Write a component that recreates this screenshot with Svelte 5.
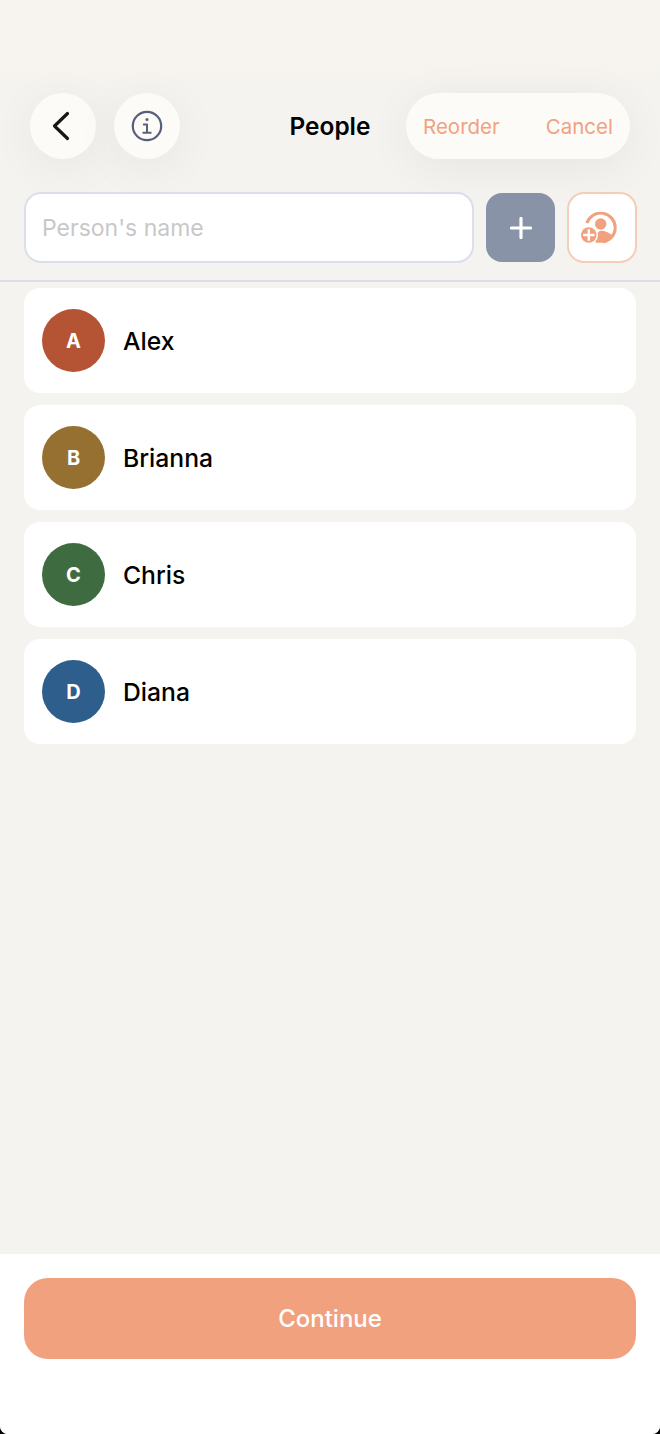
<script>
  const people = [
    { name: 'Alex', color: '#b55434' },
    { name: 'Brianna', color: '#967030' },
    { name: 'Chris', color: '#3f6b40' },
    { name: 'Diana', color: '#2e5f8c' }
  ];
</script>

<div class="page">
  <header class="topbar">
    <div class="left">
      <button class="round" aria-label="Back">
        <svg width="22" height="32" viewBox="0 0 22 32" fill="none">
          <path d="M15.500 3.500 L2.500 16 L15.500 28.500" stroke="#171717" stroke-width="3.200" stroke-linecap="round" stroke-linejoin="round" />
        </svg>
      </button>
      <button class="round" aria-label="Info">
        <svg width="32" height="32" viewBox="0 0 32 32" fill="none" stroke="#56607a" stroke-linecap="round">
          <circle cx="16" cy="16" r="14.200" stroke-width="2.200" />
          <circle cx="16" cy="9.500" r="1.500" fill="#56607a" stroke="none" />
          <path d="M12.800 14.500 H16 V22.500 M12.300 22.800 H19.700" stroke-width="2" stroke-linejoin="round" />
        </svg>
      </button>
    </div>
    <h1>People</h1>
    <div class="pill">
      <span>Reorder</span>
      <span>Cancel</span>
    </div>
  </header>

  <div class="entry">
    <input type="text" placeholder="Person's name" />
    <button class="add" aria-label="Add">
      <svg width="22" height="22" viewBox="0 0 22 22" fill="none" stroke="#fff" stroke-width="3.200" stroke-linecap="round">
        <path d="M11 1.500 V20.500 M1.500 11 H20.500" />
      </svg>
    </button>
    <button class="contacts" aria-label="Add from contacts">
      <svg width="36" height="32" viewBox="0 0 36 32" fill="none">
        <path d="M5.800 11 A14.600 14.600 0 1 1 22 30.100" stroke="#f2a17f" stroke-width="3" />
        <circle cx="19.700" cy="12" r="5.700" fill="#f2a17f" />
        <path d="M14.500 30.800 C15 22 17 18.800 20 18.800 C24 18.800 28 20.500 31.500 23.500 C29.500 28 25 30.500 21 30.800 Z" fill="#f2a17f" />
        <circle cx="7.800" cy="23" r="9.200" fill="#fff" />
        <circle cx="7.800" cy="23" r="7.800" fill="#f2a17f" />
        <path d="M7.800 18.300 V27.700 M3.100 23 H12.500" stroke="#fff" stroke-width="2.400" stroke-linecap="round" />
      </svg>
    </button>
  </div>

  <div class="list">
    {#each people as p}
      <div class="card">
        <div class="avatar" style="background: {p.color}">{p.name[0]}</div>
        <div class="name">{p.name}</div>
      </div>
    {/each}
  </div>

  <footer>
    <button class="continue">Continue</button>
  </footer>
</div>

<style>
  :global(body) {
    margin: 0;
    background: #000;
    font-family: Inter, "Liberation Sans", sans-serif;
  }

  button {
    border: none;
    padding: 0;
    font-family: inherit;
    display: flex;
    align-items: center;
    justify-content: center;
  }

  .page {
    height: 1434px;
    display: flex;
    flex-direction: column;
    background: linear-gradient(#f7f4ef 55px, #f5f3ef 85px);
    border-radius: 0 0 8px 8px;
    overflow: hidden;
  }

  .topbar {
    position: relative;
    z-index: 1;
    display: grid;
    grid-template-columns: 1fr auto 1fr;
    align-items: center;
    padding: 93px 30px 0;
  }

  .left {
    display: flex;
    gap: 18px;
  }

  .round {
    width: 66px;
    height: 66px;
    border-radius: 50%;
    background: #fcfbf7;
    box-shadow: 0 8px 48px rgba(0, 0, 0, 0.06);
  }

  h1 {
    margin: 0;
    font-size: 24.4px;
    font-weight: 600;
    color: #000;
  }

  .pill {
    justify-self: end;
    width: 224px;
    height: 66px;
    box-sizing: border-box;
    padding: 1px 17px 0;
    display: flex;
    align-items: center;
    justify-content: space-between;
    border-radius: 33px;
    background: #fcfbf7;
    box-shadow: 0 8px 48px rgba(0, 0, 0, 0.06);
    font-size: 20.5px;
    color: #f2a17f;
  }

  .entry {
    display: flex;
    align-items: center;
    gap: 12px;
    margin-top: 33px;
    padding: 0 23px 17px 24px;
    border-bottom: 2px solid #dcdee6;
  }

  input {
    flex: 1;
    min-width: 0;
    height: 71px;
    box-sizing: border-box;
    padding: 0 16px;
    border: 2px solid #dcdfe9;
    border-radius: 17px;
    background: #fff;
    font-family: inherit;
    font-size: 23px;
    outline: none;
  }

  input::placeholder {
    color: #c8c8c8;
    opacity: 1;
  }

  .add {
    width: 69px;
    height: 69px;
    border-radius: 16px;
    background: #8893a7;
  }

  .contacts {
    width: 70px;
    height: 71px;
    box-sizing: border-box;
    border: 2px solid #f6cdb9;
    border-radius: 17px;
    background: #fff;
    padding-right: 6px;
  }

  .list {
    display: flex;
    flex-direction: column;
    gap: 12px;
    padding: 6px 24px 0;
  }

  .card {
    height: 105px;
    display: flex;
    align-items: center;
    gap: 18px;
    padding: 0 18px;
    border-radius: 16px;
    background: #fff;
  }

  .avatar {
    width: 63px;
    height: 63px;
    border-radius: 50%;
    display: flex;
    align-items: center;
    justify-content: center;
    color: #fff;
    font-size: 20px;
    font-weight: 700;
  }

  .name {
    padding-top: 1px;
    font-size: 24.7px;
    font-weight: 500;
    color: #000;
  }

  footer {
    margin-top: auto;
    height: 180px;
    box-sizing: border-box;
    padding: 24px 24px 0;
    background: #fff;
  }

  .continue {
    width: 100%;
    height: 81px;
    border-radius: 24px;
    background: #f2a17f;
    color: #fff;
    font-size: 24px;
    font-weight: 500;
  }
</style>
